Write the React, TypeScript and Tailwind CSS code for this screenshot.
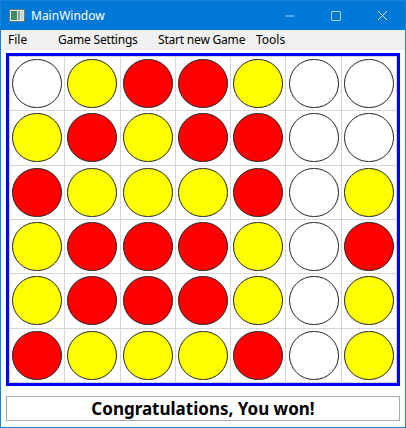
import { Minus, Square, X } from 'lucide-react'

type Disc = 'W' | 'Y' | 'R'

const board: Disc[][] = [
  ['W', 'Y', 'R', 'R', 'Y', 'W', 'W'],
  ['Y', 'R', 'Y', 'R', 'R', 'W', 'W'],
  ['R', 'Y', 'Y', 'Y', 'R', 'W', 'Y'],
  ['Y', 'R', 'R', 'R', 'Y', 'W', 'R'],
  ['Y', 'R', 'R', 'R', 'Y', 'W', 'Y'],
  ['R', 'Y', 'Y', 'Y', 'R', 'W', 'Y'],
]

const discColor: Record<Disc, string> = {
  W: 'bg-white',
  Y: 'bg-[#ffff00]',
  R: 'bg-[#ff0000]',
}

function AppIcon() {
  return (
    <svg width="16" height="13" viewBox="0 0 16 13">
      <rect x="0.5" y="0.5" width="15" height="12" fill="#dfe6e3" stroke="#6a7a74" />
      <rect x="2" y="2" width="6" height="9" fill="#3f8d5c" />
      <rect x="9" y="2" width="2" height="9" fill="#8aa39a" />
      <rect x="12" y="2" width="2" height="9" fill="#c9d3cf" />
    </svg>
  )
}

export default function App() {
  return (
    <div
      className="flex h-[428px] w-[406px] flex-col border border-[#1a82d6] bg-white"
      style={{ fontFamily: '"Segoe UI", "Noto Sans", "Open Sans", sans-serif' }}
    >
      {/* title bar */}
      <div className="flex h-[29px] shrink-0 items-center bg-[#0078d7] text-white">
        <div className="ml-[8px] flex items-center">
          <AppIcon />
        </div>
        <span className="ml-[6px] text-[12px]">MainWindow</span>
        <div className="ml-auto flex h-full">
          <button className="grid h-full w-[46px] place-items-center">
            <Minus size={14} strokeWidth={1.2} />
          </button>
          <button className="grid h-full w-[46px] place-items-center">
            <Square size={12} strokeWidth={1.4} />
          </button>
          <button className="grid h-full w-[46px] place-items-center">
            <X size={17} strokeWidth={1.2} />
          </button>
        </div>
      </div>

      {/* menu */}
      <div className="flex h-[20px] shrink-0 items-center bg-[#f0f0f0] pl-[7px] text-[12px] text-black">
        <span className="w-[50px]">File</span>
        <span className="w-[100px] tracking-[-0.2px]">Game Settings</span>
        <span className="w-[98px] tracking-[-0.2px]">Start new Game</span>
        <span>Tools</span>
      </div>

      {/* board */}
      <div className="mx-[5px] mt-[3px] h-[333px] shrink-0 border-[3px] border-[#0000ff]">
        <div className="grid h-full grid-cols-7 grid-rows-6 gap-px bg-[#d6d6d6] p-px">
          {board.flat().map((d, i) => (
            <div key={i} className="flex items-center justify-center bg-white">
              <div className={`h-[49px] w-[50px] rounded-full border border-[#222] ${discColor[d]}`} />
            </div>
          ))}
        </div>
      </div>

      {/* status */}
      <div className="mx-[5px] mt-[10px] flex h-[25px] shrink-0 items-center justify-center border border-[#a9a9a9] text-[17px] font-bold text-black">
        Congratulations, You won!
      </div>
    </div>
  )
}
